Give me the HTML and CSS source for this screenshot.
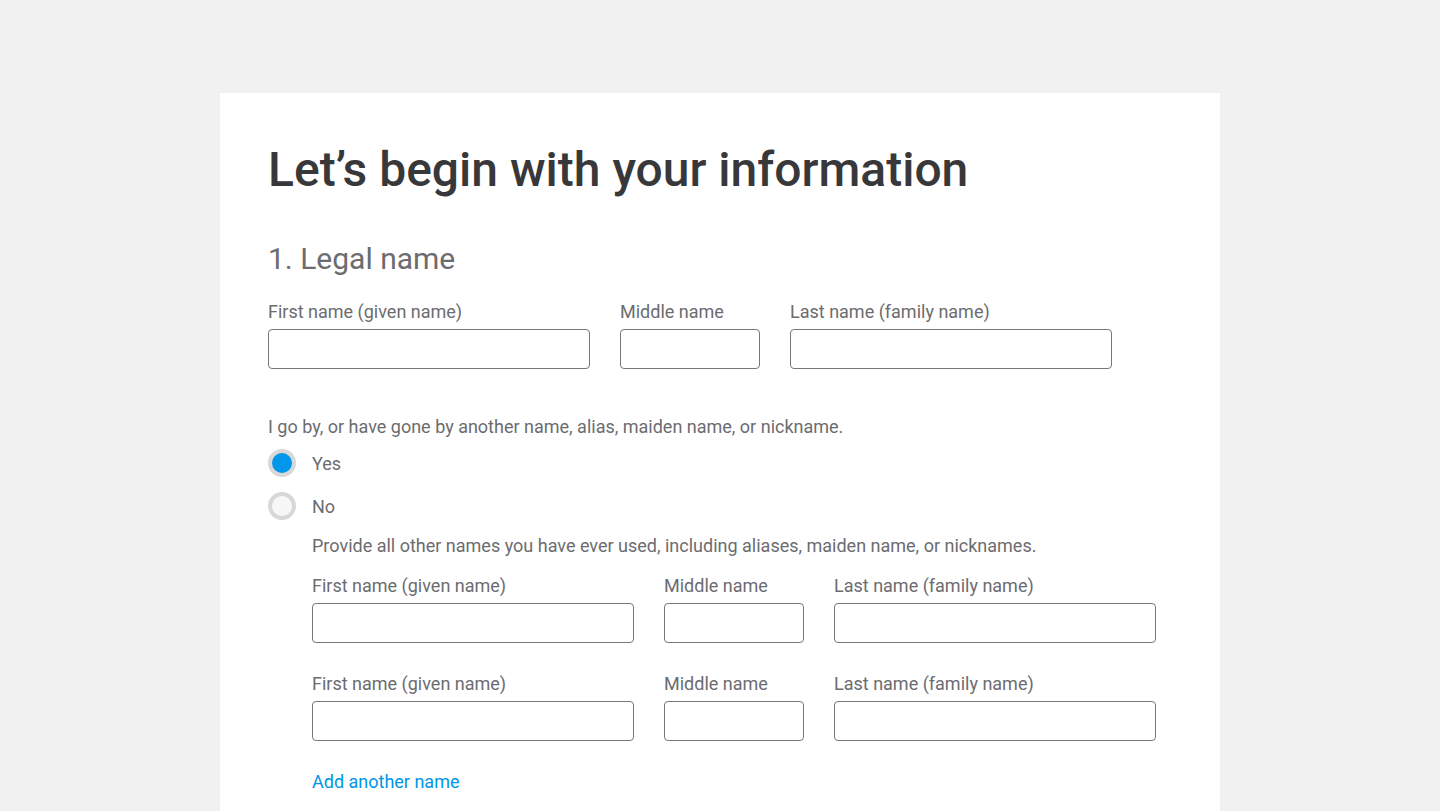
FILE: index.html
```html
<!DOCTYPE html>
<html lang="en">
<head>
<meta charset="utf-8">
<title>Let's begin with your information</title>
<link rel="stylesheet" href="styles.css">
</head>
<body>
<main class="card">
  <h1 class="title">Let’s begin with your information</h1>
  <h2 class="section">1. Legal name</h2>
  <div class="name-row">
    <label class="field wide"><span class="label">First name (given name)</span><input class="input" type="text"></label>
    <label class="field narrow"><span class="label">Middle name</span><input class="input" type="text"></label>
    <label class="field wide"><span class="label">Last name (family name)</span><input class="input" type="text"></label>
  </div>
  <p class="question">I go by, or have gone by another name, alias, maiden name, or nickname.</p>
  <div class="radios">
    <label class="radio"><span class="dot checked"></span><span class="radio-text">Yes</span></label>
    <label class="radio"><span class="dot"></span><span class="radio-text">No</span></label>
  </div>
  <div class="nested">
    <p class="hint">Provide all other names you have ever used, including aliases, maiden name, or nicknames.</p>
    <div class="name-row">
      <label class="field wide"><span class="label">First name (given name)</span><input class="input" type="text"></label>
      <label class="field narrow"><span class="label">Middle name</span><input class="input" type="text"></label>
      <label class="field wide"><span class="label">Last name (family name)</span><input class="input" type="text"></label>
    </div>
    <div class="name-row">
      <label class="field wide"><span class="label">First name (given name)</span><input class="input" type="text"></label>
      <label class="field narrow"><span class="label">Middle name</span><input class="input" type="text"></label>
      <label class="field wide"><span class="label">Last name (family name)</span><input class="input" type="text"></label>
    </div>
    <a class="add-link" href="#">Add another name</a>
  </div>
</main>
</body>
</html>
```

FILE: styles.css
```css
html, body {
  margin: 0;
  padding: 0;
  background: #f1f1f1;
  font-family: Roboto, "Liberation Sans", sans-serif;
  color: #666;
}
body {
  padding-top: 93px;
  height: 811px;
  box-sizing: border-box;
  overflow: hidden;
}
.card {
  width: 1000px;
  margin-left: 220px;
  background: #fff;
  box-sizing: border-box;
  padding: 40px 48px 40px 48px;
  min-height: 800px;
}
.title {
  margin: 0;
  font-size: 48px;
  font-weight: 500;
  line-height: 74px;
  color: #38383b;
}
.section {
  margin: 34px 0 0 0;
  font-size: 30px;
  font-weight: 400;
  line-height: 36px;
  color: #6c6c70;
}
.name-row {
  display: flex;
  gap: 30px;
}
.section + .name-row {
  margin-top: 23px;
}
.field {
  display: flex;
  flex-direction: column;
}
.field.wide { width: 322px; }
.field.narrow { width: 140px; }
.label {
  font-size: 18px;
  line-height: 22px;
  color: #6c6c70;
  padding-top: 1px;
  margin-bottom: 6px;
}
.input {
  box-sizing: border-box;
  height: 40px;
  width: 100%;
  border: 1px solid #77777a;
  border-radius: 4px;
  background: #fff;
  margin: 0;
  padding: 0 10px;
  font: inherit;
}
.question {
  margin: 47px 0 0 0;
  font-size: 18px;
  line-height: 22px;
  color: #6c6c70;
}
.radios {
  margin-top: 11px;
  display: flex;
  flex-direction: column;
  gap: 15px;
}
.radio {
  display: flex;
  align-items: center;
  gap: 16px;
  height: 28px;
}
.dot {
  box-sizing: border-box;
  width: 28px;
  height: 28px;
  border-radius: 50%;
  border: 4px solid #d8d8d8;
  background: #f7f7f7;
}
.dot.checked {
  background: #0096ea;
}
.radio-text {
  font-size: 18px;
  line-height: 22px;
  padding-top: 2px;
  color: #6c6c70;
}
.nested {
  padding-left: 44px;
  margin-top: 15px;
}
.hint {
  margin: 0 0 17px 0;
  font-size: 18px;
  line-height: 22px;
  color: #6c6c70;
}
.nested .name-row + .name-row {
  margin-top: 29px;
}
.add-link {
  display: inline-block;
  margin-top: 30px;
  font-size: 18px;
  line-height: 22px;
  color: #0096e6;
  text-decoration: none;
}
```
